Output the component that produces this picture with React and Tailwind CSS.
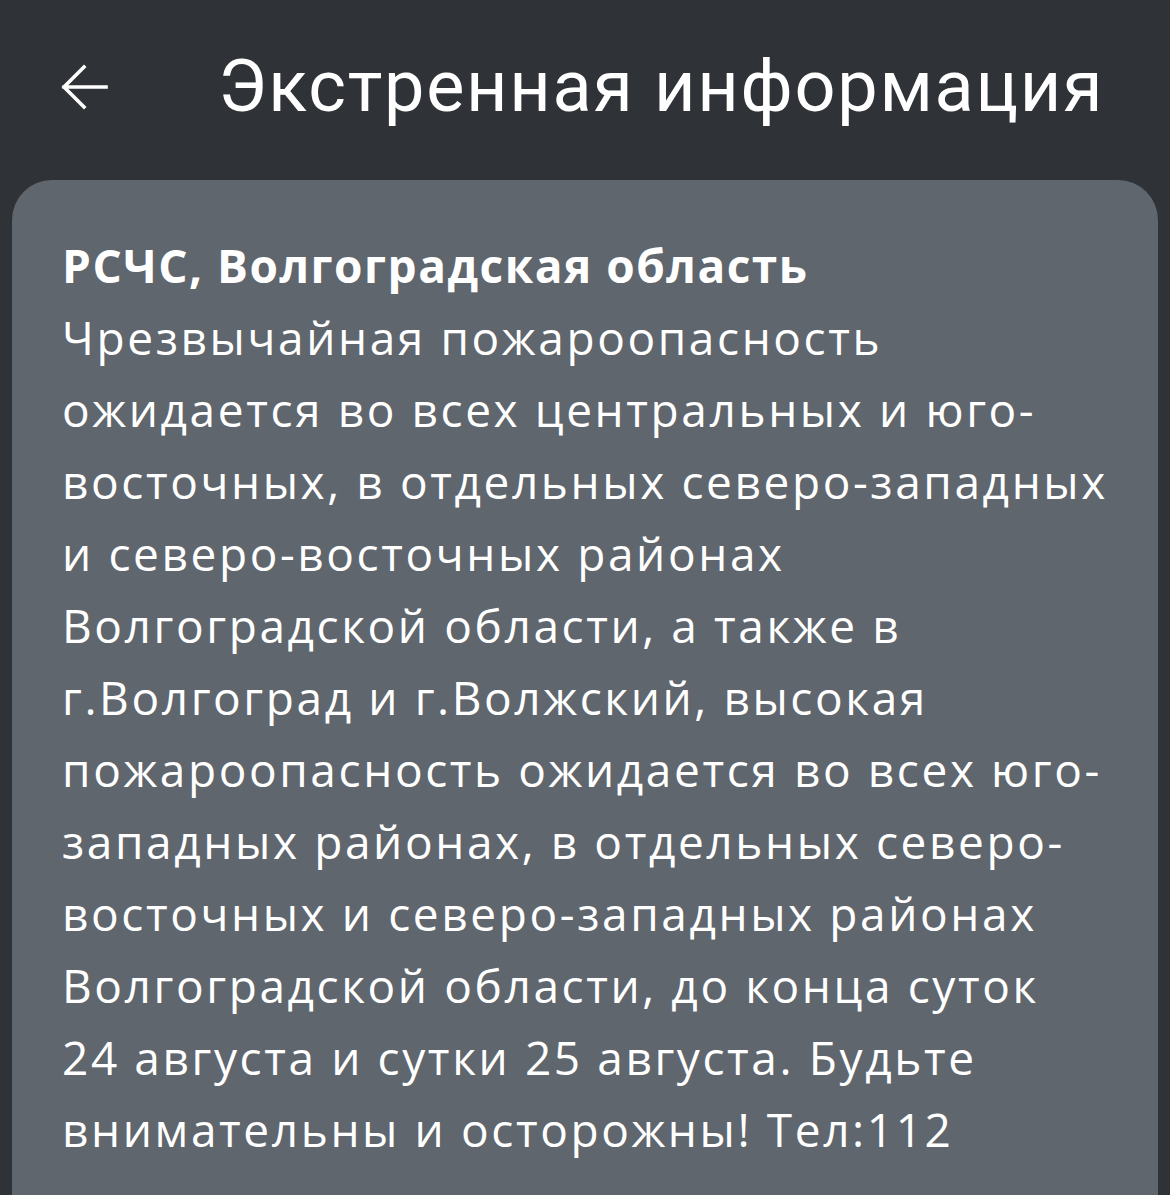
import React from "react";

const message =
  "Чрезвычайная пожароопасность ожидается во всех центральных и юго-восточных, в отдельных северо-западных и северо-восточных районах Волгоградской области, а также в г.Волгоград и г.Волжский, высокая пожароопасность ожидается во всех юго-западных районах, в отдельных северо-восточных и северо-западных районах Волгоградской области, до конца суток 24 августа и сутки 25 августа. Будьте внимательны и осторожны! Тел:112";

const BackArrow = () => (
  <svg width="52" height="52" viewBox="0 0 52 52" fill="none">
    <path
      d="M48 26H6M26 6L6 26l20 20"
      stroke="white"
      strokeWidth="3.6"
      strokeLinecap="square"
    />
  </svg>
);

export default function App() {
  return (
    <div className="h-[1195px] w-[1170px] overflow-hidden bg-[#2f3236]">
      {/* Top bar */}
      <div className="flex h-[180px] items-center pb-[6px]">
        <div className="ml-[58px] flex w-[52px] items-center">
          <BackArrow />
        </div>
        <h1 className="ml-[108px] font-['Roboto',sans-serif] text-[72px] leading-none font-normal tracking-[1.7px] text-white">
          Экстренная информация
        </h1>
      </div>

      {/* Message card */}
      <div className="mx-[12px] h-[1100px] rounded-[40px] bg-[#5f666d] px-[50px] pt-[49px]">
        <p className="font-['Open_Sans',sans-serif] text-[46px] leading-[72px] font-bold tracking-[1.5px] text-white">
          РСЧС, Волгоградская область
        </p>
        <p className="font-['Open_Sans',sans-serif] text-[46px] leading-[72px] font-normal tracking-[2.6px] text-white">
          {message}
        </p>
      </div>
    </div>
  );
}
